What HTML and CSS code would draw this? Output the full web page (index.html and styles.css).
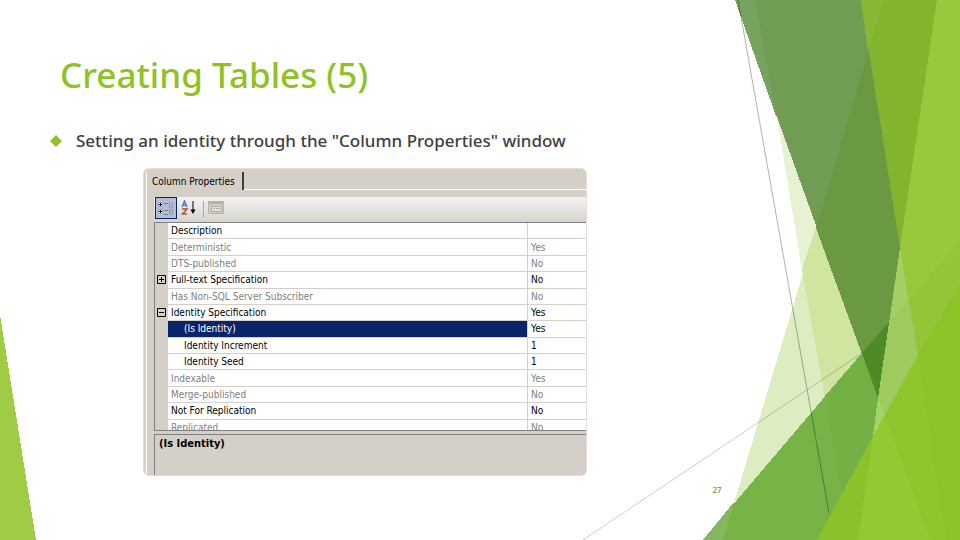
FILE: index.html
```html
<!DOCTYPE html>
<html lang="en">
<head>
    <meta charset="UTF-8">
    <meta name="viewport" content="width=device-width, initial-scale=1.0">
    <title>Creating Tables (5)</title>
    <link rel="stylesheet" href="styles.css">
</head>
<body>
    <!-- slide background -->
    <svg class="facets" viewBox="0 0 960 540" preserveAspectRatio="none" aria-hidden="true">
        <polygon points="0,315 0,540 36,540" fill="#9fcb45"/>

        <!-- pale facets -->
        <polygon points="755,0 778,123 802,270 825,396 870,360 850,123" fill="#e7f2d3"/>
        <polygon points="885,0 723,540 800,540 885,420" fill="#deedc1"/>
        <polygon points="802,270 816,228 840,228 880,353 825,398" fill="#d0e5a0"/>

        <!-- mid green -->
        <polygon points="703,540 862,353 890,321 960,240 960,540" fill="#77b347"/>
        <polygon points="703,540 734,502 723,540" fill="#83b860"/>
        <polygon points="825,396 862,353 930,280 930,540 850,540" fill="#74b145"/>

        <!-- dark green -->
        <polygon points="735,0 861,0 905,248 878,398" fill="#709c53"/>
        <polygon points="735,0 755,0 776,116" fill="#76a35f"/>
        <polygon points="868,52 903,248 890,321 878,398 816,228" fill="#6a9941"/>
        <polygon points="862,353 890,321 880,398 878,398" fill="#4e8a26"/>

        <!-- right side -->
        <polygon points="861,0 937,0 900,248" fill="#84b42e"/>
        <polygon points="861,0 884,0 868,52" fill="#88b833"/>
        <polygon points="937,0 960,0 960,540 873,436 900,248" fill="#98c83c"/>
        <polygon points="904,305 960,240 960,400 900,400" fill="#94c437"/>
        <polygon points="900,248 918,355 873,436 878,398" fill="#9fcb5e"/>
        <polygon points="900,248 908,300 890,321" fill="#a5ce67"/>
        <polygon points="878,398 885,415 873,436" fill="#a3d468"/>

        <!-- foreground -->
        <polygon points="817,540 873,436 918,355 960,284 960,540" fill="#91c52d"/>
        <polygon points="817,540 873,436 858,540" fill="#8cc12b"/>
        <polygon points="873,436 885,415 930,540 858,540" fill="#95c934"/>
        <polygon points="918,355 960,284 960,540 946,540" fill="#8ec229"/>

        <path d="M738 0 829 513" stroke="#000" stroke-opacity=".3"/>
        <path d="M583 540 862 353" stroke="#000" stroke-opacity=".2"/>
    </svg>

    <main class="slide">
        <h1>Creating Tables (5)</h1>
        <ul class="points">
            <li>
                <svg class="bullet" viewBox="0 0 12 12" aria-hidden="true"><path d="M6 0 12 6 6 12 0 6z" fill="#90c226"/></svg>
                Setting an identity through the "Column Properties" window
            </li>
        </ul>

        <section class="window">
            <div class="tabs"><button class="tab">Column Properties</button></div>
            <div class="panel">
                <div class="toolbar">
                    <button class="tool active" aria-label="Categorized">
                        <svg width="18" height="16" viewBox="0 0 18 16" fill="none">
                            <path d="M1.5 2.500h4v4h-4zM1.500 9.500h4v4h-4z" fill="#fff" stroke="#8fa3cc"/>
                            <path d="M2 4.500h3M3.500 3v3M2 11.500h3M3.500 10v3" stroke="#000"/>
                            <path d="M7 3.500h4M7 10.500h4M7 14.500h4" stroke="#6c7894"/>
                            <path d="M12.500 3v5h3v-5zM12.500 10v4h3v-4z" stroke="#8d99b8"/>
                        </svg>
                    </button>
                    <button class="tool" aria-label="Alphabetical">
                        <svg width="18" height="16" viewBox="0 0 18 16" fill="none">
                            <path d="M2 7 4.500 1 7 7M3 5h3" stroke="#5b78bd" stroke-width="1.500"/>
                            <path d="M2 9h5L2.500 14H7" stroke="#b8503c" stroke-width="1.500"/>
                            <path d="M13 1v11" stroke="#000"/>
                            <path d="M10.500 9.500h5L13 14z" fill="#000"/>
                        </svg>
                    </button>
                    <span class="divider"></span>
                    <button class="tool" aria-label="Property Pages" disabled>
                        <svg width="18" height="16" viewBox="0 0 18 16" fill="none">
                            <path d="M1.500 1.500h15v12h-15z" fill="#d0cec6" stroke="#b5b2a9"/>
                            <path d="M2 3h14" stroke="#b5b2a9" stroke-width="2"/>
                            <path d="M4.500 6.500h10v5h-10z" fill="#e5e3dc" stroke="#b0ada4"/>
                            <path d="M6 8.500h2M9 8.500h4" stroke="#b0ada4"/>
                        </svg>
                    </button>
                </div>
                <div class="grid">
                    <table>
                        <tr><td class="mark"></td><th>Description</th><td></td></tr>
                        <tr class="off"><td class="mark"></td><th>Deterministic</th><td>Yes</td></tr>
                        <tr class="off"><td class="mark"></td><th>DTS-published</th><td>No</td></tr>
                        <tr><td class="mark"><button class="expand" aria-label="Expand"><svg viewBox="0 0 9 9"><path d="M.5.5h8v8h-8zM2 4.500h5M4.500 2v5" fill="none" stroke="#000"/></svg></button></td><th>Full-text Specification</th><td>No</td></tr>
                        <tr class="off"><td class="mark"></td><th>Has Non-SQL Server Subscriber</th><td>No</td></tr>
                        <tr><td class="mark"><button class="expand" aria-label="Collapse"><svg viewBox="0 0 9 9"><path d="M.5.5h8v8h-8zM2 4.500h5" fill="none" stroke="#000"/></svg></button></td><th>Identity Specification</th><td>Yes</td></tr>
                        <tr class="child selected"><td class="mark"></td><th>(Is Identity)</th><td>Yes</td></tr>
                        <tr class="child"><td class="mark"></td><th>Identity Increment</th><td>1</td></tr>
                        <tr class="child"><td class="mark"></td><th>Identity Seed</th><td>1</td></tr>
                        <tr class="off"><td class="mark"></td><th>Indexable</th><td>Yes</td></tr>
                        <tr class="off"><td class="mark"></td><th>Merge-published</th><td>No</td></tr>
                        <tr><td class="mark"></td><th>Not For Replication</th><td>No</td></tr>
                        <tr class="off"><td class="mark"></td><th>Replicated</th><td>No</td></tr>
                    </table>
                </div>
                <div class="help">(Is Identity)</div>
            </div>
        </section>
        <footer>27</footer>
    </main>
</body>
</html>
```
FILE: styles.css
```css
body {
    margin: 0;
    background: #fff;
    font-family: "Noto Sans", "Open Sans", sans-serif;
    color: #404040;
}
.facets {
    position: absolute;
    top: 0;
    left: 0;
    width: 100%;
    height: 100vh;
    z-index: -1;
}
.facets polygon {
    shape-rendering: crispEdges;
}
.slide {
    box-sizing: border-box;
    min-height: 100vh;
    width: 76%;
    padding: 50px 8px 0 50px;
}
h1 {
    margin: 0 0 28px 10px;
    font-size: 35px;
    line-height: 50px;
    font-weight: 500;
    color: #90c226;
}
.points {
    list-style: none;
    margin: 0;
    padding: 0;
}
.points li {
    display: flex;
    align-items: center;
    gap: 14px;
    font-size: 17px;
    font-weight: 500;
    line-height: 26px;
}
.bullet {
    width: 12px;
    height: 12px;
}
.window {
    box-sizing: border-box;
    width: 444px;
    margin: 14px 0 0 93px;
    padding: 3px 0 0 2px;
    border: 1px solid #e6dcd8;
    border-radius: 6px;
    overflow: hidden;
    background: #d4d0c8;
    font-family: "DejaVu Sans Condensed", "Noto Sans", sans-serif;
    font-size: 10px;
    color: #000;
}
button {
    margin: 0;
    padding: 0;
    border: 0;
    background: none;
    font: inherit;
    color: inherit;
}
.tabs {
    border-bottom: 1px solid #fff;
    height: 17px;
}
.tab {
    height: 18px;
    padding: 0 7px 0 5px;
    border-left: 1px solid #fff;
    border-right: 2px solid #404040;
    background: #d4d0c8;
}
.panel {
    padding: 7px 0 0 7px;
    border-left: 1px solid #fff;
}
.toolbar {
    display: flex;
    align-items: flex-start;
    gap: 1px;
    height: 25px;
    padding-left: 1px;
    background: linear-gradient(#f5f4f1, #d6d3cb);
}
.tool {
    display: flex;
    align-items: center;
    justify-content: center;
    width: 22px;
    height: 22px;
}
.tool.active {
    box-sizing: border-box;
    border: 1px solid #0a246a;
    background: #b6bdd2;
}
.divider {
    width: 1px;
    height: 16px;
    margin: 4px 0 0 2px;
    background: #a6a6a6;
}
.grid {
    height: 207px;
    overflow: hidden;
    border-top: 1px solid #808080;
    border-left: 1px solid #808080;
    border-bottom: 1px solid #808080;
    background: #fff;
}
table {
    width: 100%;
    height: 213px;
    border-collapse: separate;
    border-spacing: 0;
    table-layout: fixed;
}
th, td {
    padding: 0 3px;
    border-bottom: 1px solid #d4d0c8;
    font-weight: 400;
    text-align: left;
    line-height: 13px;
    white-space: nowrap;
}
td:last-child {
    width: 52px;
    border-left: 1px solid #d4d0c8;
}
.mark {
    width: 13px;
    padding: 0;
    background: #d4d0c8;
}
.off {
    color: #808080;
}
.child th {
    padding-left: 16px;
}
.selected th {
    background: #0a246a;
    color: #fff;
}
.expand {
    display: block;
    margin-left: 2px;
}
.expand svg {
    display: block;
    width: 9px;
    height: 9px;
}
.help {
    height: 40px;
    margin-top: 3px;
    padding: 0 4px;
    border-top: 1px solid #808080;
    border-left: 1px solid #808080;
    font-size: 11px;
    font-weight: 700;
    line-height: 18px;
}
footer {
    margin-top: 8px;
    text-align: right;
    font-size: 8px;
    font-weight: 600;
    line-height: 12px;
    color: #90a040;
}
```
